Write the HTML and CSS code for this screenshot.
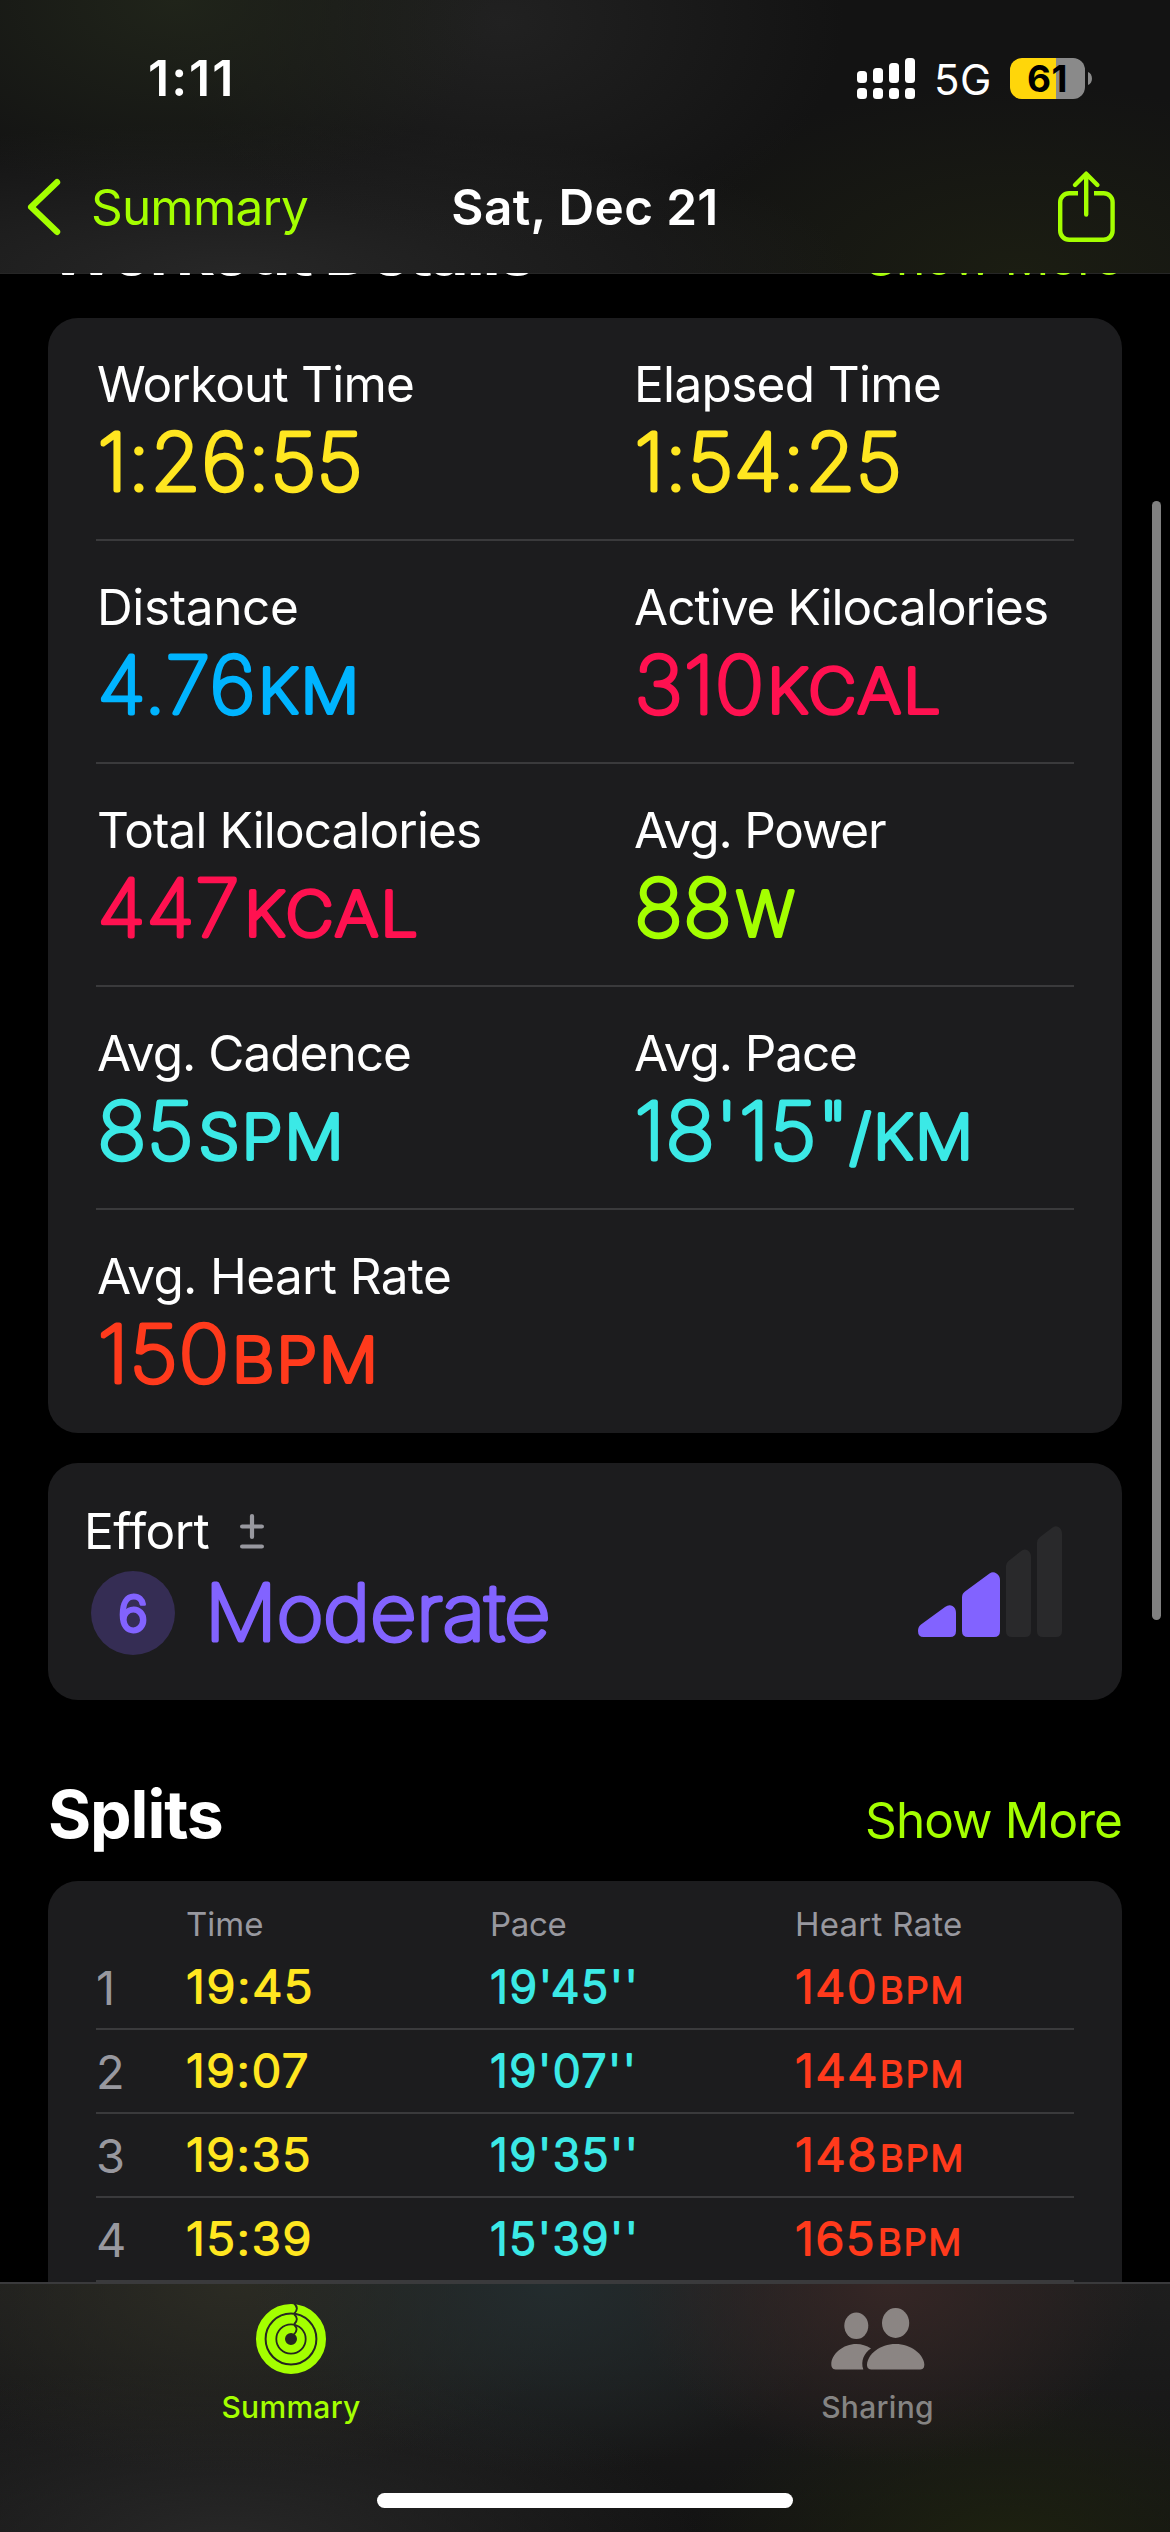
FILE: index.html
```html
<!DOCTYPE html>
<html lang="en">
<head>
<meta charset="utf-8">
<title>Workout – Sat, Dec 21</title>
<link rel="stylesheet" href="styles.css">
</head>
<body>
<div class="screen">
  <header class="topbar">
    <div class="status">
      <span class="status-time">1:11</span>
      <div class="status-right">
        <svg class="signal" width="58" height="41" viewBox="0 0 58 41" fill="#fff">
          <rect x="0" y="13" width="10" height="12" rx="3.5"/><rect x="16" y="10" width="10" height="15" rx="3.5"/><rect x="32" y="5" width="10" height="20" rx="3.5"/><rect x="48" y="0" width="10" height="25" rx="3.5"/>
          <rect x="0" y="30" width="10" height="11" rx="3.5"/><rect x="16" y="30" width="10" height="11" rx="3.5"/><rect x="32" y="30" width="10" height="11" rx="3.5"/><rect x="48" y="30" width="10" height="11" rx="3.5"/>
        </svg>
        <span class="network">5G</span>
        <div class="battery"><span class="battery-level">61</span></div>
        <svg class="battery-tip" width="4" height="13" viewBox="0 0 4 13"><path d="M0 0C5.3 2 5.3 11 0 13Z" fill="#8a8a8a"/></svg>
      </div>
    </div>
    <nav class="nav">
      <a class="back">
        <svg width="34" height="58" viewBox="0 0 34 58" fill="none" stroke="#a4ff00" stroke-width="6.4" stroke-linecap="round" stroke-linejoin="round"><path d="M30 4.2 4.2 29 30 53.8"/></svg>
        <span>Summary</span>
      </a>
      <h1 class="nav-title">Sat, Dec 21</h1>
      <a class="share">
        <svg width="57" height="72" viewBox="0 0 57 72" fill="none" stroke="#a4ff00" stroke-width="4.4" stroke-linejoin="round"><path d="M20 22.2H11.2a9 9 0 0 0-9 9V59.8a9 9 0 0 0 9 9H45.6a9 9 0 0 0 9-9V31.2a9 9 0 0 0-9-9H36"/><path d="M28.2 3V43.5M17 14 28.2 2.7 39.4 14" stroke-linecap="round"/></svg>
      </a>
    </nav>
  </header>

  <main class="content">
    <div class="section-head section-head--details">
      <h2>Workout Details</h2><a>Show More</a>
    </div>

    <section class="card details">
      <div class="stat-row">
        <div class="stat stat--workout yellow"><div class="stat-label">Workout Time</div>
          <svg class="value" width="440" height="90"><text x="1.6" y="73.5" textLength="265.8" lengthAdjust="spacingAndGlyphs">1:26:55</text></svg></div>
        <div class="stat stat--elapsed yellow"><div class="stat-label">Elapsed Time</div>
          <svg class="value" width="440" height="90"><text x="1.6" y="73.5" textLength="267.8" lengthAdjust="spacingAndGlyphs">1:54:25</text></svg></div>
      </div>
      <div class="stat-row">
        <div class="stat stat--distance blue"><div class="stat-label">Distance</div>
          <svg class="value" width="440" height="90"><text x="1.6" y="73.5" textLength="158.9" lengthAdjust="spacingAndGlyphs">4.76</text><text class="unit" x="162.2" y="73.5" textLength="103" lengthAdjust="spacingAndGlyphs">KM</text></svg></div>
        <div class="stat stat--active pink"><div class="stat-label">Active Kilocalories</div>
          <svg class="value" width="440" height="90"><text x="1.4" y="73.5" textLength="130.7" lengthAdjust="spacingAndGlyphs">310</text><text class="unit" x="134.2" y="73.5" textLength="175.4" lengthAdjust="spacingAndGlyphs">KCAL</text></svg></div>
      </div>
      <div class="stat-row">
        <div class="stat stat--total pink"><div class="stat-label">Total Kilocalories</div>
          <svg class="value" width="440" height="90"><text x="1.6" y="73.5" textLength="142.7" lengthAdjust="spacingAndGlyphs">447</text><text class="unit" x="148.2" y="73.5" textLength="175.8" lengthAdjust="spacingAndGlyphs">KCAL</text></svg></div>
        <div class="stat stat--power green"><div class="stat-label">Avg. Power</div>
          <svg class="value" width="440" height="90"><text x="1.6" y="73.5" textLength="98" lengthAdjust="spacingAndGlyphs">88</text><text class="unit" x="103" y="73.5" textLength="58.5" lengthAdjust="spacingAndGlyphs">W</text></svg></div>
      </div>
      <div class="stat-row">
        <div class="stat stat--cadence cyan"><div class="stat-label">Avg. Cadence</div>
          <svg class="value" width="440" height="90"><text x="1.6" y="73.5" textLength="96.8" lengthAdjust="spacingAndGlyphs">85</text><text class="unit" x="102.6" y="73.5" textLength="147" lengthAdjust="spacingAndGlyphs">SPM</text></svg></div>
        <div class="stat stat--pace cyan"><div class="stat-label">Avg. Pace</div>
          <svg class="value" width="440" height="90"><text x="1.6" y="73.5" textLength="215.4" lengthAdjust="spacingAndGlyphs">18'15"</text><text class="unit" x="216.6" y="73.5" textLength="125.4" lengthAdjust="spacingAndGlyphs">/KM</text></svg></div>
      </div>
      <div class="stat-row">
        <div class="stat stat--heart red"><div class="stat-label">Avg. Heart Rate</div>
          <svg class="value" width="440" height="90"><text x="1.6" y="73.5" textLength="132.5" lengthAdjust="spacingAndGlyphs">150</text><text class="unit" x="136" y="73.5" textLength="148" lengthAdjust="spacingAndGlyphs">BPM</text></svg></div>
      </div>
    </section>

    <section class="card effort">
      <div>
        <div class="effort-label">Effort
          <svg width="24" height="38" viewBox="0 0 24 38" stroke="#98989f" stroke-width="4.2" stroke-linecap="round"><path d="M2.1 14.5H21.900M12 4V25M2.100 34.5H21.900"/></svg>
        </div>
        <div class="effort-row">
          <svg class="effort-score" width="84" height="84"><circle cx="42" cy="42" r="42" fill="#352d54"/><text x="42" y="60.5" text-anchor="middle">6</text></svg>
          <svg class="effort-name" width="380" height="84"><text x="30.2" y="69.4" textLength="345.5" lengthAdjust="spacingAndGlyphs">Moderate</text></svg>
        </div>
      </div>
      <svg class="effort-bars" width="144" height="111" viewBox="0 0 144 111">
        <g fill="#8263ff"><path d="M3 98.500 27 81Q31 78 34.500 80 38 82 38 87V105Q38 111 32 111H5.500Q0 111 0 105 0 100.500 3 98.500Z"/><path d="M47 65.500 71.500 47.500Q75 45 78.500 47.500 82 49.500 82 54V105Q82 111 76 111H50Q44 111 44 105V71.500Q44 67.700 47 65.500Z"/></g>
        <g fill="#29292b"><path d="M90.500 35 102.500 25.500Q106 22.300 109.500 24.200 113 26.200 113 31V105Q113 111 107 111H94Q88 111 88 105V40Q88 37 90.500 35Z"/><path d="M121.500 11.500 133.500 2.300Q137-.9 140.500 1.100 144 3.200 144 8V105Q144 111 138 111H125Q119 111 119 105V17Q119 13.500 121.500 11.500Z"/></g>
      </svg>
    </section>

    <div class="section-head section-head--splits">
      <h2>Splits</h2><a>Show More</a>
    </div>

    <section class="card splits">
      <div class="split-head"><span></span><span class="h-time">Time</span><span class="h-pace">Pace</span><span class="h-heart">Heart Rate</span></div>
      <div class="split"><span class="split-no">1</span>
        <svg class="cell yellow"><text y="57" textLength="128" lengthAdjust="spacingAndGlyphs">19:45</text></svg>
        <svg class="cell cyan"><text y="57" textLength="149.5" lengthAdjust="spacingAndGlyphs">19'45''</text></svg>
        <svg class="cell red"><text y="57" textLength="83" lengthAdjust="spacingAndGlyphs">140</text><text class="cell-unit" x="85" y="57" textLength="85.4" lengthAdjust="spacingAndGlyphs">BPM</text></svg></div>
      <div class="split"><span class="split-no">2</span>
        <svg class="cell yellow"><text y="57" textLength="124" lengthAdjust="spacingAndGlyphs">19:07</text></svg>
        <svg class="cell cyan"><text y="57" textLength="147.5" lengthAdjust="spacingAndGlyphs">19'07''</text></svg>
        <svg class="cell red"><text y="57" textLength="84" lengthAdjust="spacingAndGlyphs">144</text><text class="cell-unit" x="85" y="57" textLength="85.4" lengthAdjust="spacingAndGlyphs">BPM</text></svg></div>
      <div class="split"><span class="split-no">3</span>
        <svg class="cell yellow"><text y="57" textLength="126" lengthAdjust="spacingAndGlyphs">19:35</text></svg>
        <svg class="cell cyan"><text y="57" textLength="149.5" lengthAdjust="spacingAndGlyphs">19'35''</text></svg>
        <svg class="cell red"><text y="57" textLength="83" lengthAdjust="spacingAndGlyphs">148</text><text class="cell-unit" x="85" y="57" textLength="85.4" lengthAdjust="spacingAndGlyphs">BPM</text></svg></div>
      <div class="split"><span class="split-no">4</span>
        <svg class="cell yellow"><text y="57" textLength="127" lengthAdjust="spacingAndGlyphs">15:39</text></svg>
        <svg class="cell cyan"><text y="57" textLength="149.5" lengthAdjust="spacingAndGlyphs">15'39''</text></svg>
        <svg class="cell red"><text y="57" textLength="81" lengthAdjust="spacingAndGlyphs">165</text><text class="cell-unit" x="83" y="57" textLength="85.4" lengthAdjust="spacingAndGlyphs">BPM</text></svg></div>
    </section>
  </main>

  <footer class="tabbar">
    <a class="tab tab--active">
      <svg width="70" height="70" viewBox="0 0 70 70" fill="none">
        <g stroke="#a4ff00"><circle cx="35" cy="35" r="30.7" stroke-width="8.6"/><circle cx="35" cy="35" r="20" stroke-width="8.8"/><circle cx="35" cy="35" r="9.9" stroke-width="7.8"/></g>
        <g stroke="#282823" stroke-width="1.9"><path d="M38.200-.5Q43.500 4.500 38.200 9.600M38.200 10.200Q43.500 15 38.200 20.200M38.200 20.800Q43 25.500 38 30.300"/></g>
      </svg>
      <span>Summary</span>
    </a>
    <a class="tab">
      <svg width="94" height="70" viewBox="0 0 94 70" fill="#8b8583">
        <ellipse cx="25.3" cy="21.8" rx="12" ry="13.2"/><ellipse cx="64.6" cy="19" rx="13.6" ry="15"/>
        <path d="M40 44.500C35.500 41.500 30.500 40 25.500 40 12 40 .5 50 .3 60 .3 64 2 65.600 6 65.600H32.300C29.500 57 33 49 40 44.500Z"/>
        <path d="M64.600 40C49 40 36.500 50.500 36 60.500 36 64 37.500 65.600 41.500 65.600H88C92 65.600 93.300 64 93.300 60.500 92.800 50.500 80 40 64.600 40Z"/>
      </svg>
      <span>Sharing</span>
    </a>
    <div class="home-indicator"></div>
  </footer>
  <div class="scroll-thumb"></div>
</div>
</body>
</html>
```
FILE: styles.css
```css
* { box-sizing: border-box; }
body {
  margin: 0;
  background: #000;
  color: #fff;
  font-family: Inter, "Liberation Sans", sans-serif;
  font-size: 49.5px;
}
h1, h2 { margin: 0; }
svg { display: block; overflow: visible; flex: none; }

.screen {
  position: relative;
  width: 1170px;
  height: 2532px;
  display: flex;
  flex-direction: column;
  overflow: hidden;
}

/* Status bar and navigation */
.topbar {
  flex: none;
  height: 273px;
  position: relative;
  z-index: 1;
  box-shadow: 0 1px rgba(255, 255, 255, .15);
  background:
    radial-gradient(320px 200px at 15% 0, #20241a, transparent),
    radial-gradient(340px 230px at 43% 8%, #212121, transparent),
    radial-gradient(620px 150px at 20% 100%, #272727, transparent),
    radial-gradient(380px 190px at 87% 100%, #1b1d12, transparent),
    #131313;
}
.status {
  height: 141px;
  padding: 15px 78px 0 148px;
  display: flex;
  align-items: center;
  justify-content: space-between;
}
.status-time { font-size: 50px; font-weight: 600; letter-spacing: 2px; line-height: 60px; }
.status-right { display: flex; align-items: center; }
.network { width: 60px; margin: 3px 16px 0 19px; font-size: 42px; line-height: 50px; letter-spacing: .5px; }
.battery {
  width: 75px;
  height: 41px;
  display: flex;
  align-items: center;
  justify-content: center;
  border-radius: 12px;
  background: linear-gradient(90deg, #ffd60a 46px, #8a8a8a 46px);
  color: #000;
}
.battery-level { font-size: 37px; font-weight: 700; line-height: 41px; letter-spacing: .5px; }
.battery-tip { margin-left: 3px; }

.nav {
  height: 132px;
  padding: 0 55px 0 27px;
  display: grid;
  grid-template-columns: 1fr auto 1fr;
  align-items: center;
}
.nav-title { font-size: 49.5px; font-weight: 600; letter-spacing: .35px; line-height: 60px; transform: translateX(14px); }
.back { display: flex; align-items: center; gap: 30px; color: #a4ff00; letter-spacing: -.83px; line-height: 60px; }
.share { justify-self: end; margin-top: -1px; }

/* Scrolling content */
.content { height: 2009px; flex: none; padding: 0 48px; overflow: hidden; }
.section-head {
  height: 80px;
  margin-bottom: 27px;
  display: flex;
  align-items: baseline;
  justify-content: space-between;
}
.section-head h2 { font-size: 66px; font-weight: 700; line-height: 80px; letter-spacing: -1.1px; }
.section-head a { color: #a4ff00; line-height: 60px; letter-spacing: -.93px; }
.section-head--details { margin-top: -62px; }
.section-head--details h2 { letter-spacing: -1.9px; }
.section-head--splits { margin-top: 74px; }
.card { background: #1c1c1e; border-radius: 30px; }

.yellow { --tint: #ffe620; }
.blue { --tint: #00b4ff; }
.pink { --tint: #ff1150; }
.green { --tint: #a4ff00; }
.cyan { --tint: #3be9e6; }
.red { --tint: #ff3a1c; }

/* Metric grid */
.details { padding: 0 48px; }
.stat-row {
  height: 223px;
  padding-top: 36px;
  display: grid;
  grid-template-columns: 537px 1fr;
  border-bottom: 2px solid #3a3a3c;
}
.stat-row:last-child { border-bottom: 0; }
.stat-label { height: 60px; margin: 0 0 2px 1px; line-height: 60px; white-space: nowrap; letter-spacing: var(--track); }
.stat--workout { --track: -.8px; }
.stat--elapsed { --track: -.67px; }
.stat--distance { --track: -.37px; }
.stat--active { --track: -.97px; }
.stat--total { --track: -.89px; }
.stat--power { --track: -1.2px; }
.stat--cadence { --track: -.98px; }
.stat--pace { --track: -1.1px; }
.stat--heart { --track: -.63px; }

/* Rounded numerals: a thin face thickened by a round-joined stroke */
.value text, .effort-name text, .effort-score text, .cell text { stroke-linejoin: round; fill: var(--tint); stroke: var(--tint); }
.value text { font-size: 78px; font-weight: 100; stroke-width: 5px; letter-spacing: 1px; }
.value .unit { font-size: 61.5px; font-weight: 200; stroke-width: 4.2px; letter-spacing: 2px; }
.stat--power .unit { letter-spacing: 0; }

/* Effort */
.effort {
  --tint: #8263ff;
  height: 237px;
  margin-top: 30px;
  padding: 38px 60px 0 36px;
  display: flex;
  justify-content: space-between;
}
.effort-label { height: 60px; display: flex; align-items: center; gap: 31px; line-height: 60px; letter-spacing: -.5px; }
.effort-row { margin: 10px 0 0 7px; display: flex; }
.effort-score text { font-size: 50px; font-weight: 300; stroke-width: 3px; }
.effort-name text { font-size: 76.5px; font-weight: 100; stroke-width: 5.2px; letter-spacing: .5px; }
.effort-bars { margin-top: 25px; }

/* Splits */
.splits { height: 600px; padding: 24px 48px 0; }
.split-head, .split { display: grid; grid-template-columns: 90px 304px 305px 1fr; }
.split-head { height: 41px; line-height: 39px; font-size: 33px; color: #98989f; }
.h-pace { letter-spacing: -.3px; }
.h-heart { letter-spacing: .25px; }
.split { height: 84px; border-bottom: 2px solid #3a3a3c; }
.split-no { padding-top: 1px; font-size: 47px; line-height: 82px; color: #98989f; }
.cell { width: 279px; height: 82px; }
.cell text { font-size: 44.7px; font-weight: 300; stroke-width: 1.8px; letter-spacing: 1.5px; }
.cell .cell-unit { font-size: 34.8px; letter-spacing: 2px; }

.scroll-thumb {
  position: absolute;
  right: 9px;
  top: 501px;
  width: 9px;
  height: 1119px;
  border-radius: 5px;
  background: #808080;
}

/* Tab bar */
.tabbar {
  position: relative;
  flex: none;
  height: 250px;
  padding-top: 20px;
  display: grid;
  grid-template-columns: 1fr 1fr;
  border-top: 2px solid #3a3a3c;
  background:
    radial-gradient(260px 180px at 76% 0, #352625, transparent),
    radial-gradient(300px 190px at 47% 0, #232c2e, transparent),
    radial-gradient(360px 190px at 20% 0, #2b2b23, transparent),
    radial-gradient(480px 180px at 19% 105%, #282828, transparent),
    radial-gradient(320px 160px at 86% 105%, #1d2110, transparent),
    linear-gradient(#1e1e1e, #131313);
}
.tab { display: flex; flex-direction: column; align-items: center; gap: 13px; font-size: 30px; font-weight: 500; line-height: 40px; letter-spacing: .3px; color: #858483; }
.tab--active { color: #a4ff00; padding-right: 3px; }
.home-indicator {
  position: absolute;
  left: 377px;
  bottom: 24px;
  width: 416px;
  height: 15px;
  border-radius: 8px;
  background: #fff;
}
```
